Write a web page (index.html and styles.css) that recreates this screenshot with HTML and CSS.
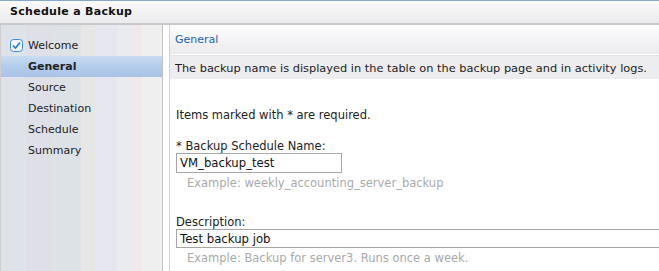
FILE: index.html
```html
<!DOCTYPE html>
<html lang="en">
<head>
    <meta charset="UTF-8">
    <title>Schedule a Backup</title>
    <link rel="stylesheet" href="styles.css">
</head>
<body>
    <div class="titlebar">Schedule a Backup</div>
    <div class="main">
        <ul class="steps">
            <li class="step done">
                <svg class="check" width="13" height="13" viewBox="0 0 13 13">
                    <rect x="0.5" y="0.5" width="12" height="12" rx="3" fill="#eef5fc" stroke="#3b8ddb"/>
                    <path d="M3 6.5 L5.5 9 L10 3.5" fill="none" stroke="#2a78cc" stroke-width="1.6"/>
                </svg>
                Welcome
            </li>
            <li class="step active">General</li>
            <li class="step">Source</li>
            <li class="step">Destination</li>
            <li class="step">Schedule</li>
            <li class="step">Summary</li>
        </ul>
        <div class="content">
            <div class="section-head">General</div>
            <div class="intro">The backup name is displayed in the table on the backup page and in activity logs.</div>
            <div class="form">
                <p class="required-note">Items marked with * are required.</p>
                <div class="field">
                    <label class="field-label">* Backup Schedule Name:</label>
                    <input class="text-input short" type="text" value="VM_backup_test">
                    <div class="hint">Example: weekly_accounting_server_backup</div>
                </div>
                <div class="field">
                    <label class="field-label">Description:</label>
                    <input class="text-input wide" type="text" value="Test backup job">
                    <div class="hint">Example: Backup for server3. Runs once a week.</div>
                </div>
            </div>
        </div>
    </div>
</body>
</html>
```
FILE: styles.css
```css
body {
    margin: 0;
    font-family: 'DejaVu Sans', sans-serif;
    font-size: 11px;
    line-height: 13px;
    color: #222;
    background: #fff;
    overflow: hidden;
}

.titlebar {
    height: 22px;
    border-top: 1px solid #86a8cf;
    border-bottom: 2px solid #c9c8ca;
    background: linear-gradient(#fbfafb, #ebeaec);
    padding-left: 10px;
    line-height: 22px;
    font-weight: bold;
    letter-spacing: 0.3px;
    color: #111;
}

.main {
    display: flex;
    height: 246px;
}

.steps {
    flex-shrink: 0;
    list-style: none;
    margin: 0;
    padding: 10px 0 0;
    width: 161px;
    border-left: 1px solid #cfcfcf;
    border-right: 1px solid #c4c4c4;
    background: linear-gradient(90deg,
        #dde3e8 0, #dde3e8 25px,
        #dfdfe8 25px, #dfdfe8 50px,
        #dde2e6 50px, #dde2e6 80px,
        #e6e6e4 80px, #e6e6e4 94px,
        #e6e7f0 94px, #e6e7f0 116px,
        #e8ebf0 116px, #e8ebf0 130px,
        #efe8ed 130px, #efe8ed 141px,
        #efefef 141px);
}

.step {
    height: 21px;
    line-height: 21px;
    padding-left: 27px;
    position: relative;
}

.step .check {
    position: absolute;
    left: 9px;
    top: 4px;
}

.step.active {
    font-weight: bold;
    background: linear-gradient(#c9dcf1, #b5cdec 45%, #a9c3e6);
}

.content {
    flex: 1;
    min-width: 0;
    overflow: hidden;
    margin-left: 6px;
    border-left: 1px solid #d2d2d2;
    font-size: 11.5px;
}

.section-head {
    height: 29px;
    line-height: 30px;
    padding-left: 5px;
    font-size: 11px;
    color: #1c64a8;
    background: linear-gradient(#fefdfe, #f6f5f7 40%, #ebeaec);
    border-bottom: 1px solid #fff;
}

.intro {
    border-top: 1px dotted #d8d8da;
    background: #edecee;
    padding: 6px 0 4px 5px;
    font-size: 11.35px;
    white-space: nowrap;
}

.form {
    padding-left: 6px;
}

.required-note {
    margin: 30px 0 18px;
}

.field {
    margin-bottom: 26px;
}

.field-label {
    display: block;
}

.text-input {
    display: block;
    box-sizing: border-box;
    height: 20px;
    margin: 0;
    padding: 0 3px;
    border: 1px solid #a6a6a6;
    font-family: 'DejaVu Sans', sans-serif;
    font-size: 11.7px;
    color: #111;
    outline: none;
}

.short {
    width: 166px;
}

.wide {
    width: 600px;
    height: 19px;
}

.hint {
    margin-top: 4px;
    padding-left: 11px;
    color: #a9a9a9;
}
```
